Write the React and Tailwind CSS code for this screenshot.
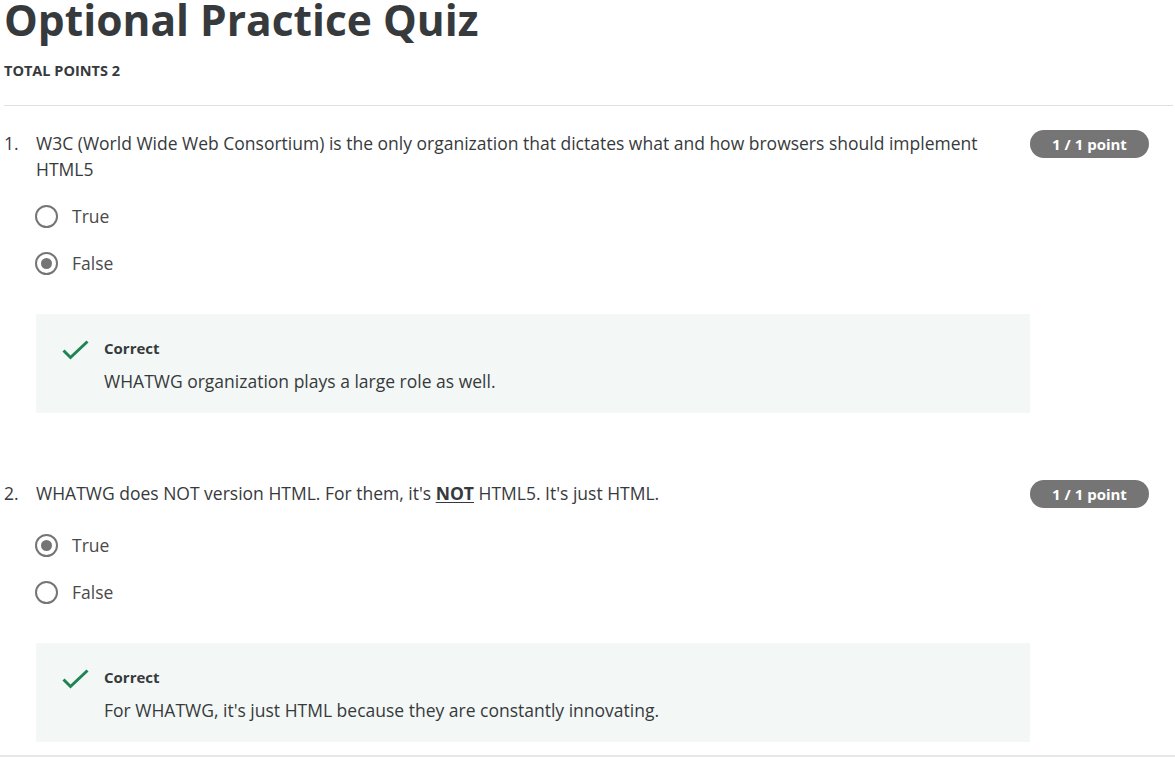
import { Fragment } from 'react';

const questions = [
  {
    text: 'W3C (World Wide Web Consortium) is the only organization that dictates what and how browsers should implement HTML5',
    options: ['True', 'False'],
    selected: 1,
    feedback: 'WHATWG organization plays a large role as well.',
    gap: 'mt-[23px]',
  },
  {
    text: (
      <Fragment>
        WHATWG does NOT version HTML. For them, it's{' '}
        <span className="font-bold underline underline-offset-2">NOT</span> HTML5. It's just HTML.
      </Fragment>
    ),
    options: ['True', 'False'],
    selected: 0,
    feedback: "For WHATWG, it's just HTML because they are constantly innovating.",
    gap: 'mt-[28px]',
  },
];

const Radio = ({ checked }) => (
  <span className="w-[23px] h-[23px] rounded-full border-2 border-[#757575] flex items-center justify-center shrink-0 bg-white">
    {checked && <span className="w-[11px] h-[11px] rounded-full bg-[#757575]" />}
  </span>
);

const Check = () => (
  <svg width="27" height="20" viewBox="0 0 27 20" className="shrink-0 mt-[3px]">
    <path d="M1.5 10.5 L8.5 17.5 L25.5 1.5" fill="none" stroke="#1f8354" strokeWidth="3" />
  </svg>
);

const Question = ({ q, index }) => (
  <div className="flex">
    <div className="flex-1">
      <div className="flex text-[17.5px] leading-[26px] text-[#373a3c]">
        <span className="w-[36px] pl-[4px] shrink-0">{index + 1}.</span>
        <p className="max-w-[960px]">{q.text}</p>
      </div>
      <div className={`${q.gap} ml-[35px] flex flex-col gap-[24px]`}>
        {q.options.map((opt, i) => (
          <div key={opt} className="flex items-center gap-[14px] h-[23px]">
            <Radio checked={i === q.selected} />
            <span className="text-[17.5px] text-[#4a4a4a]">{opt}</span>
          </div>
        ))}
      </div>
      <div className="mt-[39px] ml-[36px] w-[994px] h-[99px] bg-[#f3f8f6] flex pl-[26px] pt-[23px]">
        <Check />
        <div className="ml-[15px]">
          <div className="text-[15px] font-bold text-[#373a3c] leading-[22px]">Correct</div>
          <div className="text-[17.5px] text-[#373a3c] mt-[10px] leading-[24px]">{q.feedback}</div>
        </div>
      </div>
    </div>
    <div className="w-[145px] shrink-0">
      <span className="inline-flex items-center justify-center w-[119px] h-[28px] rounded-full bg-[#757575] text-white text-[15px] font-bold">
        1 / 1 point
      </span>
    </div>
  </div>
);

export default function App() {
  return (
    <div className="w-[1175px] h-[757px] overflow-hidden bg-white font-['Open_Sans',sans-serif] relative">
      <h1 className="text-[42.5px] font-bold text-[#373a3c] leading-[46px] pl-[4px] -mt-[3px]">
        Optional Practice Quiz
      </h1>
      <div className="text-[14.5px] font-bold text-[#373a3c] pl-[4px] mt-[17px]">TOTAL POINTS 2</div>
      <div className="ml-[4px] mr-[2px] mt-[23px] border-t border-[#e1e1e1]" />
      <div className="pt-[24px] flex flex-col gap-[67px]">
        {questions.map((q, i) => (
          <Question key={i} q={q} index={i} />
        ))}
      </div>
      <div className="absolute left-0 right-0 bottom-0 h-[2px] bg-[#e8e8e8]" />
    </div>
  );
}
